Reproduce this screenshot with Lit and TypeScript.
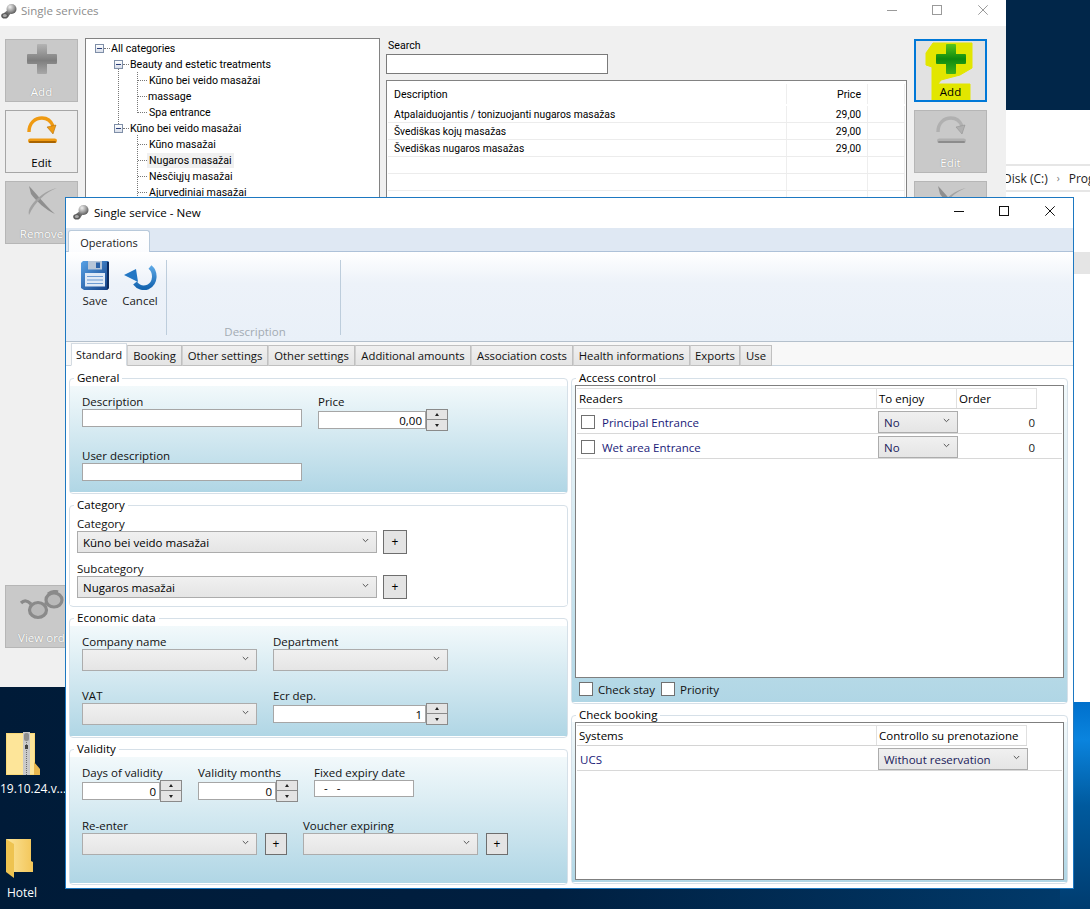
import { LitElement, html, css, svg } from "lit";
import { customElement } from "lit/decorators.js";

const metal = (id: string) => html`<svg class="appico" viewBox="0 0 16 15">
  <defs><radialGradient id=${id} cx=".35" cy=".3" r=".8"><stop offset="0" stop-color="#f0f0f0"/><stop offset=".55" stop-color="#9a9a9a"/><stop offset="1" stop-color="#4a4a4a"/></radialGradient></defs>
  <path d="M3 9l4-3 3 3-3 4z" fill="#6e6e6e"/>
  <circle cx="10.500" cy="5" r="5" fill="url(#${id})"/>
  <ellipse cx="3.800" cy="11.800" rx="3.600" ry="2.800" fill="#5a5a5a"/><ellipse cx="3.800" cy="11.500" rx="2" ry="1.500" fill="#a8a8a8"/></svg>`;

const plusIcon = (green: boolean, id: string) => html`<svg class="bigico" viewBox="0 0 32 32">
  <defs><linearGradient id=${id} x1="0" y1="0" x2="0" y2="1">
    ${green
      ? svg`<stop offset="0" stop-color="#58c41a"/><stop offset=".5" stop-color="#0e8a0e"/><stop offset="1" stop-color="#3fb01a"/>`
      : svg`<stop offset="0" stop-color="#b4b4b4"/><stop offset=".55" stop-color="#7e7e7e"/><stop offset="1" stop-color="#a8a8a8"/>`}
  </linearGradient></defs>
  <path d="M12 1h8a1 1 0 0 1 1 1v9h9a1 1 0 0 1 1 1v8a1 1 0 0 1-1 1h-9v9a1 1 0 0 1-1 1h-8a1 1 0 0 1-1-1v-9H2a1 1 0 0 1-1-1v-8a1 1 0 0 1 1-1h9V2a1 1 0 0 1 1-1z" fill="url(#${id})"/></svg>`;

const editIcon = (active: boolean) => {
  const c = active ? "#ef9a12" : "#b0b0b0";
  const d = active ? "#a96400" : "#8c8c8c";
  return html`<svg class="bigico" viewBox="0 0 32 32">
    <path d="M3 18C3 9 9 4 16 4c5 0 9 3 11 8" fill="none" stroke=${c} stroke-width="3.400"/>
    <path d="M21 13l9-2-3 9z" fill=${c} stroke=${d} stroke-width=".5"/>
    <rect x="2" y="24.500" width="29" height="4.600" rx="2.300" fill=${c}/>
    <rect x="3" y="27" width="27" height="2" rx="1" fill=${d}/></svg>`;
};

const xIcon = () => html`<svg class="bigico" viewBox="0 0 32 32">
  <path d="M3 1c6 6 15 18 26 28-9-4-19-13-24-20z" fill="#8f8f8f"/>
  <path d="M31 3C20 7 9 17 3 30c-1-3 0-6 2-9C11 12 21 5 31 3z" fill="#a3a3a3"/></svg>`;

const glassesIcon = () => html`<svg class="glass" viewBox="0 0 46 31">
  <ellipse cx="35" cy="10" rx="7.500" ry="6.500" fill="#b9b9b9"/><ellipse cx="19" cy="20" rx="8" ry="7" fill="#b9b9b9"/>
  <g fill="none" stroke="#8a8a8a" stroke-width="3.200">
    <ellipse cx="35" cy="10" rx="8" ry="7"/><ellipse cx="19" cy="20" rx="8.500" ry="7.500"/>
    <path d="M26 14l2-1M12 14C8 10 5 10 2 13M29 4c3-2 7-3 10-2"/></g></svg>`;

const saveIcon = () => html`<svg class="save" viewBox="0 0 28 30">
  <defs><linearGradient id="sv" x1="0" y1="0" x2="1" y2="1"><stop offset="0" stop-color="#58a2e6"/><stop offset="1" stop-color="#123f86"/></linearGradient></defs>
  <path d="M2 1h25l1 1v26l-2 2H3l-3-2V3z" fill="url(#sv)"/>
  <path d="M26 2l2 0v26l-2 2z" fill="#0d2c60"/>
  <path d="M7 1h14v8.500H7z" fill="#b7c6d8"/><rect x="15" y="2.500" width="4" height="5.500" fill="#2a62a8"/>
  <path d="M4 13h20v13.500H4z" fill="#dfe9f6"/>
  <path d="M6 16.500h16M6 20h16M6 23.500h16" stroke="#6d9bd2" stroke-width="1.200"/></svg>`;

const cancelIcon = () => html`<svg class="cancel" viewBox="0 0 34 28">
  <defs><linearGradient id="cn" x1="0" y1="0" x2="0" y2="1"><stop offset="0" stop-color="#5aa6e4"/><stop offset="1" stop-color="#1565b0"/></linearGradient></defs>
  <path d="M27 3C33 8 33 19 25 23 20 25 15 23 12 19" fill="none" stroke="url(#cn)" stroke-width="4.600"/>
  <path d="M1 11l12-6 2 13z" fill="#2477c4"/></svg>`;

const zipIcon = () => html`<svg class="zip" viewBox="0 0 34 43">
  <path d="M0 1h29v31l5 6v5H0z" fill="#fad978"/>
  <path d="M1 2h27v40H1z" fill="#fde9a6" opacity=".7"/>
  <path d="M28 30l6 7v6h-6z" fill="#e9b84e"/>
  <rect x="17" y="0" width="7" height="43" fill="#c9c9c9"/>
  <path d="M20.500 4v39" stroke="#6e6e6e" stroke-width="1" stroke-dasharray="1 1"/>
  <rect x="18" y="1" width="5" height="8" rx="2" fill="#8f8f8f"/><rect x="19" y="13" width="3" height="4" fill="#444"/></svg>`;

const folderIcon = () => html`<svg class="folder" viewBox="0 0 27 40">
  <defs><linearGradient id="fd" x1="0" y1="0" x2="1" y2="0"><stop offset="0" stop-color="#fbe49a"/><stop offset="1" stop-color="#f3c659"/></linearGradient></defs>
  <path d="M0 1h25v22l2 1v10H8z" fill="url(#fd)"/>
  <path d="M0 1l8 5v34L0 34z" fill="#eec350"/></svg>`;

const chev = () => html`<svg class="chev" viewBox="0 0 7 5"><path d="M.8 1l2.700 2.700L6.200 1" fill="none" stroke="#555" stroke-width="1"/></svg>`;

const ctrls = (inactive: boolean) => html`<div class="ctrls ${inactive ? "inactive" : ""}">
  <svg viewBox="0 0 10 10"><path d="M0 5.500h10" /></svg>
  <svg viewBox="0 0 10 10"><rect x=".5" y=".5" width="9" height="9" fill="none"/></svg>
  <svg viewBox="0 0 10 10"><path d="M.3.300l9.400 9.400M9.700.300L.3 9.700"/></svg></div>`;

const tree: [number, string, boolean?][] = [
  [0, "All categories"], [1, "Beauty and estetic treatments"], [2, "Kūno bei veido masažai"], [2, "massage"], [2, "Spa entrance"],
  [1, "Kūno bei veido masažai"], [2, "Kūno masažai"], [2, "Nugaros masažai", true], [2, "Nėsčiųjų masažai"], [2, "Ajurvediniai masažai"],
];
const services = ["Atpalaiduojantis / tonizuojanti nugaros masažas", "Švediškas kojų masažas", "Švediškas nugaros masažas", "", "", "", ""];
const tabs: [string, number][] = [["Standard", 56], ["Booking", 55], ["Other settings", 86], ["Other settings", 87], ["Additional amounts", 116], ["Association costs", 102], ["Health informations", 117], ["Exports", 50], ["Use", 32]];

@customElement("app-root")
export class AppRoot extends LitElement {
  static styles = css`
    :host { display: block; position: relative; width: 1090px; height: 909px; overflow: hidden; font: 11.5px/15px "Open Sans", "Noto Sans", sans-serif; color: #000;
      background: linear-gradient(90deg, #001b38 0, #001f40 50%, #013b6c 100%); }
    * { box-sizing: border-box; }
    .sky { position: absolute; left: 1000px; top: 0; width: 90px; height: 120px; background: #012649; }
    .wall { position: absolute; left: 1060px; top: 702px; width: 30px; height: 207px; background: linear-gradient(#0070cc 0, #0a84de 18%, #005a9e 50%, #003c6f 100%); }
    .explorer { position: absolute; left: 900px; top: 110px; width: 190px; height: 592px; background: #fff; padding-top: 54px; }
    .path { height: 28px; border-top: 2px solid #e6e6e6; border-bottom: 2px solid #e6e6e6; padding-left: 103px; display: flex; align-items: center; gap: 9px; white-space: nowrap; font-size: 12px; color: #222; }
    .path i { font-style: normal; color: #777; font-size: 10px; }
    .greyrow { height: 22px; margin-top: 60px; background: #e5e5e5; }

    .dicon { position: absolute; left: 0; width: 60px; display: flex; flex-direction: column; color: #fff; font-size: 12px; white-space: nowrap; }
    .d1 { top: 732px; } .d2 { top: 838px; }
    .zip { width: 34px; height: 43px; margin-left: 6px; }
    .folder { width: 27px; height: 40px; margin-left: 6px; }
    .d1 span { margin-top: 6px; } .d2 span { margin: 7px 0 0 7px; }

    .back { position: absolute; left: 0; top: 0; width: 1006px; height: 687px; background: #f0f0f0; display: flex; flex-direction: column; }
    .tb { height: 26px; background: #fff; display: flex; align-items: center; color: #8c8c8c; font-size: 11.500px; flex: none; position: relative; padding-bottom: 6px; }
    .appico { width: 16px; height: 15px; margin: 0 4px 0 1px; flex: none; }
    .tb .appico { margin-top: 2px; }
    .ctrls { position: absolute; right: 18px; top: 0; bottom: 6px; display: flex; gap: 35px; align-items: center; }
    .ctrls svg { width: 10px; height: 10px; fill: none; stroke: #111; stroke-width: 1; overflow: visible; }
    .ctrls svg:last-child { margin-left: 1px; }
    .ctrls.inactive svg { stroke: #9a9a9a; }
    .bbody { flex: 1; display: flex; padding: 13px 19px 39px 5px; min-height: 0; }
    .bcol { width: 73px; display: flex; flex-direction: column; gap: 8px; flex: none; }
    .spacer { flex: 1; }
    .bbtn { position: relative; height: 63px; width: 73px; border: 1px solid #b6b6b6; background: #c9c9c9; color: #fff; display: flex; flex-direction: column; align-items: center; padding-top: 3px; flex: none; text-shadow: 0 0 1px #777; overflow: hidden; white-space: nowrap; }
    .bbtn .lbl { position: absolute; left: 0; right: 0; top: 44px; text-align: center; font-size: 11.500px; }
    .bbtn.on { background: #ededed; border-color: #a6a6a6; color: #000; text-shadow: none; }
    .bbtn.focus { background: #e2e2e2; border: 2px solid #0078d7; color: #000; text-shadow: none; padding-top: 2px; }
    .bbtn.focus .lbl { top: 43px; }
    .bigico { width: 32px; height: 32px; flex: none; position: relative; }
    .glass { width: 46px; height: 31px; margin-top: 1px; }
    .hl { position: absolute; left: -2px; top: -2px; width: 73px; height: 63px; }
    .tree { width: 295px; margin: -1px 6px 0 7px; height: 640px; border: 1px solid #828282; background: #fff; flex: none; position: relative; padding-top: 1px; font: 10.600px/15px Roboto, sans-serif; }
    .tr { height: 16px; display: flex; align-items: center; white-space: nowrap; }
    .l0 { padding-left: 9px; } .l1 { padding-left: 28px; } .l2 { padding-left: 52px; }
    .exp { width: 9px; height: 9px; border: 1px solid #7f8fa8; background: linear-gradient(#fff, #d9dfea); flex: none; position: relative; }
    .exp::after { content: ""; position: absolute; left: 1px; right: 1px; top: 3px; height: 1px; background: #2a3f7a; }
    .dash { width: 6px; border-top: 1px dotted #777; flex: none; margin-right: 1px; }
    .l2 .dash { width: 9px; margin-right: 2px; }
    .sel { background: #f0f0f0; padding: 0 2px; margin-left: -2px; }
    .nudge { margin-left: -1px; }
    .guides { position: absolute; left: 0; top: 0; width: 100%; height: 200px; pointer-events: none; }
    .mid { width: 521px; flex: none; margin-right: 7px; font: 10.600px/15px Roboto, sans-serif; }
    .slabel { height: 15px; padding-left: 2px; margin-top: -1px; margin-bottom: 1px; }
    .sinput { width: 222px; height: 20px; border: 1px solid #7a7a7a; background: #fff; }
    .blist { margin-top: 6px; height: 540px; border: 1px solid #828282; background: #fff; padding: 3px 1px 0; }
    .brow { display: grid; grid-template-columns: 399px 81px 37px; height: 17px; border-bottom: 1px solid #ececec; font-size: 10.300px; }
    .brow.head { height: 22px; border-bottom: 0; padding-bottom: 2px; font-size: 10.600px; }
    .brow > div { padding: 1px 0 0 6px; border-right: 1px solid #eee; height: 100%; display: flex; align-items: center; white-space: nowrap; }
    .brow > div.r { justify-content: flex-end; padding: 1px 6px 0 0; }
    .brow.head > div { padding-top: 0; }

    .front { position: absolute; left: 65px; top: 197px; width: 1009px; height: 692px; background: #f4f4f4; border: 1px solid #1d78c1; display: flex; flex-direction: column; }
    .ftb { height: 30px; background: #fff; display: flex; align-items: center; padding: 0 0 2px 7px; font-size: 11.600px; flex: none; position: relative; }
    .ftb .ctrls { bottom: 4px; }
    .ftb .appico { margin: 0 5px 0 0; }
    .strip { height: 24px; background: #dfe8f3; border-bottom: 1px solid #adc1d8; padding: 2px 0 0 2px; flex: none; }
    .optab { width: 82px; height: 23px; background: linear-gradient(#fff, #fbfcfe); border: 1px solid #b9cadb; border-bottom: 0; border-radius: 3px 3px 0 0; display: flex; align-items: center; justify-content: center; font-size: 11px; color: #1a1a1a; }
    .ribbon { height: 90px; background: linear-gradient(#fff 0, #edf2f9 35%, #e9f0f8 100%); border-bottom: 1px solid #b4c0cc; display: flex; position: relative; padding-top: 8px; flex: none; }
    .ract { display: flex; flex-direction: column; align-items: center; height: 48px; color: #1a1a1a; }
    .ract span { margin-top: auto; }
    .sv { width: 30px; margin-left: 14px; }
    .cl { width: 36px; margin-left: 12px; }
    .save { width: 28px; height: 30px; }
    .cancel { width: 34px; height: 28px; margin-top: 4px; }
    .rsep { width: 1px; background: #bdcddc; height: 75px; flex: none; }
    .rs1 { margin-left: 8px; }
    .rgroup { width: 173px; position: relative; text-align: center; color: #a3abb3; padding: 64px 0 0 3px; }
    .tabs { height: 24px; display: flex; padding-left: 5px; background: #f8f8f8; border-bottom: 1px solid #c8d4de; flex: none; align-items: flex-end; }
    .tab { height: 21px; margin-bottom: -1px; border: 1px solid #c0c0c0; border-left-color: #d0d0d0; background: linear-gradient(#f0f0f0, #e4e4e4); display: flex; align-items: center; justify-content: center; white-space: nowrap; font-size: 11.300px; color: #111; }
    .tab.on { height: 23px; background: #fff; border-color: #d4dbe2; border-bottom-color: #fff; position: relative; font-size: 10.800px; }
    .content { flex: 1; background: #fff; display: flex; gap: 3px; padding: 4px 4px 0 3px; min-height: 0; }
    .col { display: flex; flex-direction: column; gap: 3px; width: 499px; flex: none; }
    .col.r { width: 497px; }
    fieldset { margin: 0; padding: 0 0 1px; border: 1px solid #d6e0e8; border-radius: 4px; min-width: 0; background: #fff; display: block; }
    legend { margin-left: 4px; padding: 0 3px; height: 16px; line-height: 16px; font-size: 11.500px; }
    .panel { background: linear-gradient(#f2f9fb 0, #b0d6e5 100%); }
    .plain { background: #fff; }
    .gen { padding: 8px 0 11px 12px; height: 106px; }
    .cat { padding: 3px 0 7px 7px; height: 92px; }
    .eco { padding: 8px 0 11px 12px; height: 110px; }
    .val { padding: 8px 0 28px 12px; height: 126px; }
    .row { display: flex; gap: 16px; align-items: flex-start; }
    .row.tight { gap: 8px; }
    .row.six { gap: 6px; }
    .row + .row { margin-top: 17px; }
    .val .row + .row { margin-top: 16px; }
    .f + .f.sub { margin-top: 7px; }
    .f { display: flex; flex-direction: column; flex: none; }
    .f label { height: 15px; white-space: nowrap; color: #111; }
    .input { height: 18px; border: 1px solid #a6a6a6; background: #fff; text-align: right; padding-right: 3px; line-height: 17px; }
    .sp { display: flex; height: 22px; }
    .sp .input { margin-top: 2px; flex: 1; }
    .spb { width: 22px; height: 22px; display: grid; grid-template-rows: 11px 11px; flex: none; }
    .spb div { border: 1px solid #8a8a8a; background: #e4e4e4; display: flex; align-items: center; justify-content: center; }
    .spb div + div { border-top: 0; }
    .spb i { width: 0; height: 0; border: 2.500px solid transparent; }
    .spb .u i { border-bottom: 3px solid #222; border-top: 0; }
    .spb .d i { border-top: 3px solid #222; border-bottom: 0; }
    .select { height: 22px; border: 1px solid #acacac; background: linear-gradient(#f0f0f0, #e5e5e5); display: flex; align-items: center; padding: 0 0 0 5px; position: relative; white-space: nowrap; flex: none; }
    .chev { position: absolute; right: 7px; top: 6px; width: 7px; height: 5px; }
    .plus { border: 1px solid #6e6e6e; background: #e4e4e4; display: flex; align-items: center; justify-content: center; font-size: 12px; flex: none; line-height: 1; }
    .p24 { width: 24px; height: 24px; margin-top: -1px; }
    .p22 { width: 22px; height: 22px; }
    .w220 { width: 220px; } .w130 { width: 130px; } .w300 { width: 300px; } .w175 { width: 175px; } .w100 { width: 100px; }
    .date { width: 100px; height: 17px; border: 1px solid #a6a6a6; background: #fff; padding-left: 5px; line-height: 14px; letter-spacing: 1px; white-space: pre; }
    .access { height: 317px; display: flex; flex-direction: column; padding: 0 3px; margin-top: -1px; }
    .grid { border: 1px solid #7f7f7f; background: #fff; flex: none; padding: 2px 1px 0; }
    .g1 { height: 293px; }
    .g2 { height: 158px; }
    .ghead { display: grid; height: 21px; border-bottom: 1px solid #d4d4d4; }
    .ghead > div { border: 1px solid #e0e0e0; border-left: 0; border-bottom: 0; padding-left: 2px; display: flex; align-items: center; white-space: nowrap; }
    .ga { grid-template-columns: 300px 80px 80px; width: 460px; }
    .gb { grid-template-columns: 300px 150px; width: 450px; }
    .grow { height: 25px; border-bottom: 1px solid #d8d8d8; display: flex; align-items: center; padding-top: 2px; color: #1a1a78; }
    .cb { width: 14px; height: 14px; border: 1px solid #707070; background: #fff; flex: none; }
    .rname { width: 297px; display: flex; align-items: center; gap: 7px; padding-left: 4px; white-space: nowrap; height: 100%; margin-right: 4px; flex: none; }
    .rname.ucs { padding-left: 3px; }
    .grow .select { color: #1a1a5a; }
    .w80 { width: 80px; } .w150 { width: 150px; }
    .num { width: 77px; text-align: right; color: #222; flex: none; }
    .checks { display: flex; align-items: center; padding-left: 4px; height: 22px; color: #111; flex: none; }
    .checks .t { margin: 0 6px 0 5px; white-space: nowrap; }
    .booking { height: 160px; padding: 0 3px 3px; margin-top: -1px; background: linear-gradient(#f2f9fb, #b0d6e5); }
  `;

  private sel(text: string, w: string) {
    return html`<div class="select ${w}">${text}${chev()}</div>`;
  }
  private spin(v: string) {
    return html`<div class="sp"><div class="input">${v}</div><div class="spb"><div class="u"><i></i></div><div class="d"><i></i></div></div></div>`;
  }

  private renderBack() {
    return html`<div class="back">
      <div class="tb">${metal("m1")}Single services${ctrls(true)}</div>
      <div class="bbody">
        <div class="bcol">
          <div class="bbtn">${plusIcon(false, "pg")}<div class="lbl">Add</div></div>
          <div class="bbtn on">${editIcon(true)}<div class="lbl">Edit</div></div>
          <div class="bbtn">${xIcon()}<div class="lbl">Remove</div></div>
          <div class="spacer"></div>
          <div class="bbtn">${glassesIcon()}<div class="lbl">View ord</div></div>
        </div>
        <div class="tree">
          <svg class="guides"><path d="M32.500 30v55M51.500 33v41M51.500 96v62" stroke="#777" stroke-dasharray="1 1" fill="none"/></svg>
          ${tree.map(([lv, t, s]) => html`<div class="tr l${lv}">
            ${lv < 2 ? html`<span class="exp"></span>` : ""}<span class="dash"></span>
            <span class="${s ? "sel" : ""} ${t === "massage" ? "nudge" : ""}">${t}</span></div>`)}
        </div>
        <div class="mid">
          <div class="slabel">Search</div>
          <div class="sinput"></div>
          <div class="blist">
            <div class="brow head"><div>Description</div><div class="r">Price</div><div></div></div>
            ${services.map((s) => html`<div class="brow"><div>${s}</div><div class="r">${s ? "29,00" : ""}</div><div></div></div>`)}
          </div>
        </div>
        <div class="bcol">
          <div class="bbtn focus">
            <svg class="hl" viewBox="0 0 73 63"><path d="M19 4L58 4 58 29 46 36 27 41 24 45 56 45 56 62 18 63 18 28 12 26 12 14z" fill="#e2e600" stroke="#e2e600" stroke-linejoin="round"/></svg>
            ${plusIcon(true, "pv")}<div class="lbl">Add</div></div>
          <div class="bbtn">${editIcon(false)}<div class="lbl">Edit</div></div>
          <div class="bbtn">${xIcon()}<div class="lbl">Remove</div></div>
        </div>
      </div>
    </div>`;
  }

  private renderLeft() {
    return html`<div class="col">
      <fieldset><legend>General</legend><div class="panel gen">
        <div class="row">
          <div class="f w220"><label>Description</label><div class="input"></div></div>
          <div class="f w130"><label>Price</label>${this.spin("0,00")}</div>
        </div>
        <div class="row"><div class="f w220"><label>User description</label><div class="input"></div></div></div>
      </div></fieldset>
      <fieldset><legend>Category</legend><div class="plain cat">
        <div class="f"><label>Category</label><div class="row six">${this.sel("Kūno bei veido masažai", "w300")}<div class="plus p24">+</div></div></div>
        <div class="f sub"><label>Subcategory</label><div class="row six">${this.sel("Nugaros masažai", "w300")}<div class="plus p24">+</div></div></div>
      </div></fieldset>
      <fieldset><legend>Economic data</legend><div class="panel eco">
        <div class="row">
          <div class="f"><label>Company name</label>${this.sel("", "w175")}</div>
          <div class="f"><label>Department</label>${this.sel("", "w175")}</div>
        </div>
        <div class="row">
          <div class="f"><label>VAT</label>${this.sel("", "w175")}</div>
          <div class="f w175"><label>Ecr dep.</label>${this.spin("1")}</div>
        </div>
      </div></fieldset>
      <fieldset><legend>Validity</legend><div class="panel val">
        <div class="row">
          <div class="f w100"><label>Days of validity</label>${this.spin("0")}</div>
          <div class="f w100"><label>Validity months</label>${this.spin("0")}</div>
          <div class="f w100"><label>Fixed expiry date</label><div class="date"> -  -</div></div>
        </div>
        <div class="row">
          <div class="f"><label>Re-enter</label><div class="row tight">${this.sel("", "w175")}<div class="plus p22">+</div></div></div>
          <div class="f"><label>Voucher expiring</label><div class="row tight">${this.sel("", "w175")}<div class="plus p22">+</div></div></div>
        </div>
      </div></fieldset>
    </div>`;
  }

  private renderRight() {
    return html`<div class="col r">
      <fieldset><legend>Access control</legend><div class="panel access">
        <div class="grid g1">
          <div class="ghead ga"><div>Readers</div><div>To enjoy</div><div>Order</div></div>
          ${["Principal Entrance", "Wet area Entrance"].map((n) => html`<div class="grow">
            <div class="rname"><span class="cb"></span>${n}</div>${this.sel("No", "w80")}<div class="num">0</div></div>`)}
        </div>
        <div class="checks"><span class="cb"></span><span class="t">Check stay</span><span class="cb"></span><span class="t">Priority</span></div>
      </div></fieldset>
      <fieldset><legend>Check booking</legend><div class="booking">
        <div class="grid g2">
          <div class="ghead gb"><div>Systems</div><div>Controllo su prenotazione</div></div>
          <div class="grow"><div class="rname ucs">UCS</div>${this.sel("Without reservation", "w150")}</div>
        </div>
      </div></fieldset>
    </div>`;
  }

  render() {
    return html`
      <div class="sky"></div>
      <div class="wall"></div>
      <div class="explorer"><div class="path"><span>Disk (C:)</span><i>›</i><span>Prog</span></div><div class="greyrow"></div></div>
      <div class="dicon d1">${zipIcon()}<span>19.10.24.v...</span></div>
      <div class="dicon d2">${folderIcon()}<span>Hotel</span></div>
      ${this.renderBack()}
      <div class="front">
        <div class="ftb">${metal("m2")}Single service - New${ctrls(false)}</div>
        <div class="strip"><div class="optab">Operations</div></div>
        <div class="ribbon">
          <div class="ract sv">${saveIcon()}<span>Save</span></div>
          <div class="ract cl">${cancelIcon()}<span>Cancel</span></div>
          <div class="rsep rs1"></div>
          <div class="rgroup">Description</div>
          <div class="rsep"></div>
        </div>
        <div class="tabs">${tabs.map(([t, w], i) => html`<div class="tab ${i === 0 ? "on" : ""}" style="width:${w}px">${t}</div>`)}</div>
        <div class="content">${this.renderLeft()}${this.renderRight()}</div>
      </div>`;
  }
}
